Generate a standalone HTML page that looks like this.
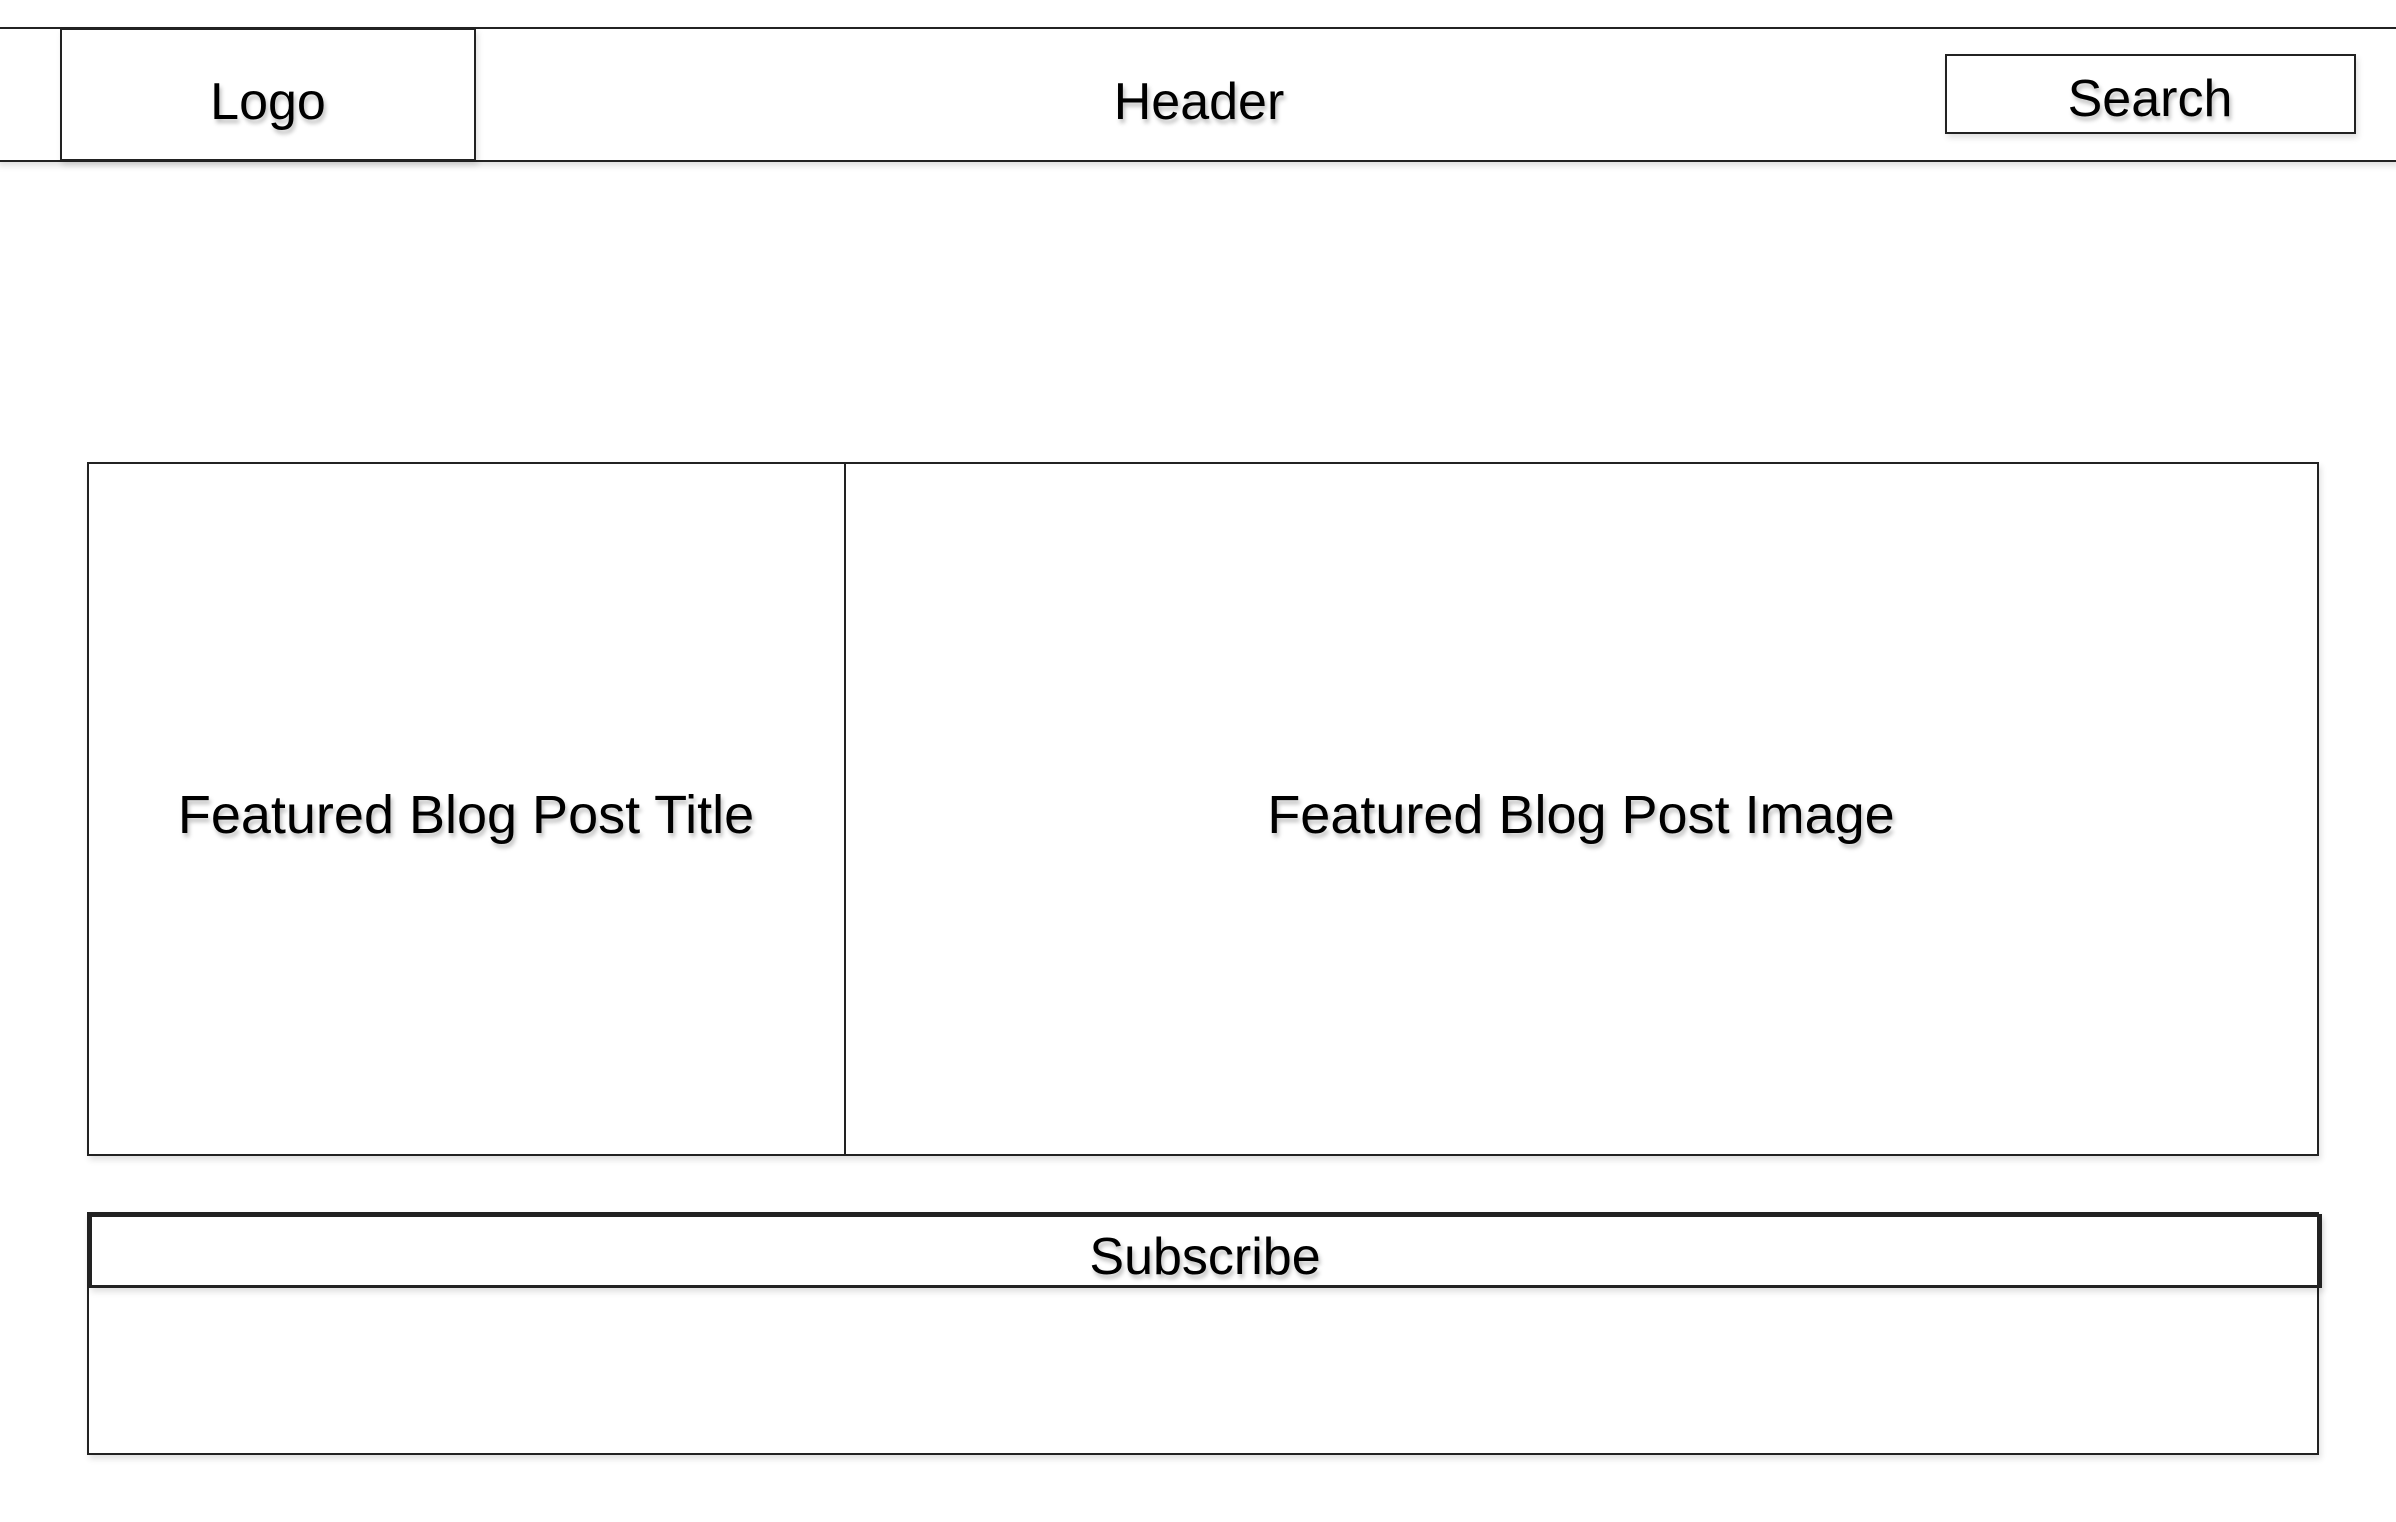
<!DOCTYPE html>
<html><head><meta charset="utf-8"><style>
html,body{margin:0;padding:0;background:#fff;width:2396px;height:1522px;overflow:hidden;position:relative;font-family:"Liberation Sans",sans-serif;}
.b{position:absolute;box-sizing:border-box;border:2px solid #222;box-shadow:2px 4px 6px rgba(0,0,0,0.12);}
.t{position:absolute;font-size:52px;line-height:52px;white-space:nowrap;color:#000;text-shadow:2px 4px 4px rgba(0,0,0,0.25);transform:translateX(-50%);}
</style></head><body>
<div class="b" style="left:-4px;top:27px;width:2402px;height:135px;border-right:none"></div>
<div class="b" style="left:60px;top:28px;width:416px;height:133px;"></div>
<div class="b" style="left:1945px;top:54px;width:411px;height:80px;"></div>
<div class="t" style="left:268px;top:76px;">Logo</div>
<div class="t" style="left:1199px;top:76px;">Header</div>
<div class="t" style="left:2150px;top:73px;">Search</div>

<div class="b" style="left:87px;top:462px;width:2232px;height:694px;"></div>
<div class="b" style="left:844px;top:462px;width:2px;height:694px;border-width:0 0 0 2px;box-shadow:none"></div>
<div class="t" style="left:466px;top:788px;font-size:54px;line-height:54px;">Featured Blog Post Title</div>
<div class="t" style="left:1581px;top:788px;font-size:54px;line-height:54px;">Featured Blog Post Image</div>

<div class="b" style="left:87px;top:1212px;width:2232px;height:243px;"></div>
<div class="b" style="left:89px;top:1214px;width:2233px;height:74px;border-width:3px 3px 3px 3px;"></div>
<div class="t" style="left:1205px;top:1231px;">Subscribe</div>
</body></html>
